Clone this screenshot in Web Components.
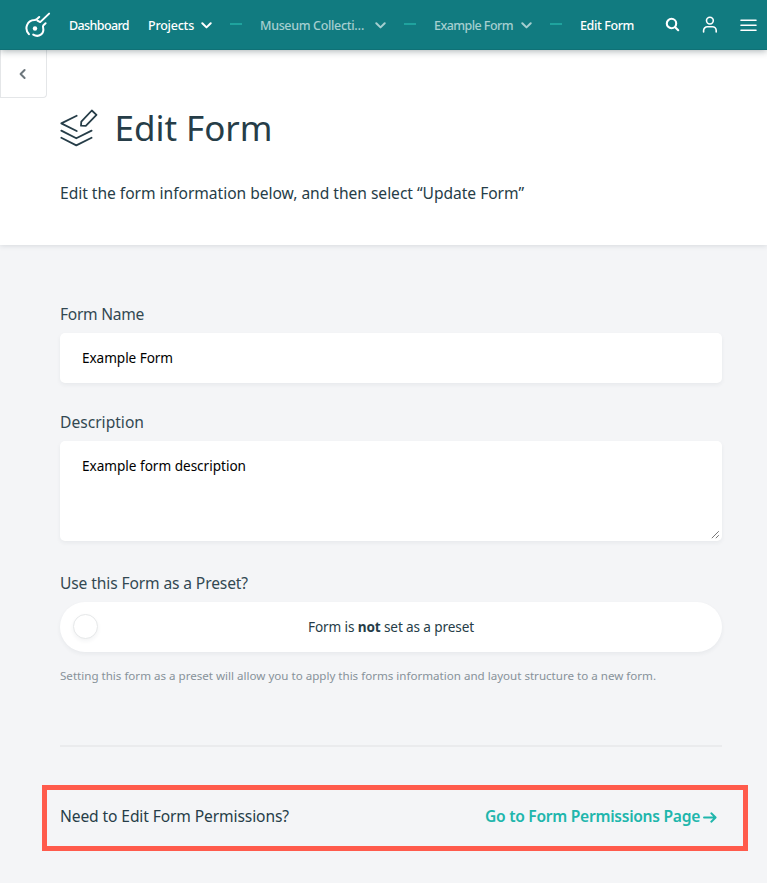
<!DOCTYPE html>
<html lang="en">
<head>
<meta charset="utf-8">
<title>Edit Form</title>
<style>
body{margin:0;background:#f4f5f7;color:#263d48;font-family:"Noto Sans","Open Sans",sans-serif;height:883px;overflow:hidden}
</style>
</head>
<body>
<edit-form-page></edit-form-page>
<script>
const define = (name, html, setup) => customElements.define(name, class extends HTMLElement {
  connectedCallback() {
    if (this.shadowRoot) return;
    const t = document.createElement('template');
    t.innerHTML = html;
    this.attachShadow({mode: 'open'}).append(t.content.cloneNode(true));
    if (setup) setup(this, this.shadowRoot);
  }
});

/* One line of text whose tracking is adjusted so it occupies the width "w". */
define('fit-text', `<style>:host{display:block;flex:none;white-space:nowrap}span{display:inline-block}</style><span><slot></slot></span>`, (el, root) => {
  const w = +el.getAttribute('w'), s = root.querySelector('span');
  el.style.width = w + 'px';
  s.style.letterSpacing = (w - s.getBoundingClientRect().width) / el.textContent.length + 'px';
});

define('chevron-down', `<style>:host{display:block;flex:none;width:11px;height:7px}svg{display:block}</style>
<svg width="11" height="7" viewBox="0 0 11 7" fill="none" stroke="currentColor" stroke-width="2" stroke-linecap="round" stroke-linejoin="round"><path d="M1.3 1.2 5.5 5.4 9.7 1.2"/></svg>`);

define('crumb-dash', `<style>:host{display:block;flex:none;width:12px;height:2px;margin-bottom:1px;background:#1fa39e}</style>`);

define('nav-crumb', `<style>:host{display:flex;flex:none;align-items:center;font-size:12.5px;font-weight:500;line-height:20px;color:#fff;padding-top:2px}
:host([muted]){color:#a5cfd0}slot{display:contents}</style><slot></slot>`);

define('app-bar', `<style>
:host{display:flex;align-items:center;height:50px;box-sizing:border-box;background:#117b80;box-shadow:0 1px 7px rgba(20,45,50,.38);border-bottom:1px solid #0f7176;position:relative;z-index:2;color:#fff}
svg{display:block;flex:none}
.logo{margin:1px 0 0 24px}
</style>
<svg class="logo" width="28" height="28" viewBox="0 0 28 28" fill="none" stroke="#fff" stroke-width="2" stroke-linecap="round" stroke-linejoin="round">
<path d="M4.9 23.2C-.2 17.2 3.2 9.4 10.5 9.1C11.6 9 12.1 8.9 12.7 8.3L15.2 6"/><path d="M13.4 9.6 16.2 11.1 25.1 2.6"/><path d="M21.6 12.2 19.2 14.5C18.8 15 18.9 15.6 19.1 16.4C20.6 22.6 14.8 27 9.2 23.6"/><circle cx="11" cy="17.5" r="2.2" fill="#fff" stroke="none"/></svg>
<nav-crumb style="margin-left:17px"><fit-text w="60">Dashboard</fit-text></nav-crumb>
<nav-crumb style="margin-left:19px"><fit-text w="46">Projects</fit-text><chevron-down style="margin-left:7px"></chevron-down></nav-crumb>
<crumb-dash style="margin-left:18px"></crumb-dash>
<nav-crumb muted style="margin-left:18px"><fit-text w="104">Museum Collecti…</fit-text><chevron-down style="margin-left:11px"></chevron-down></nav-crumb>
<crumb-dash style="margin-left:18px"></crumb-dash>
<nav-crumb muted style="margin-left:18px"><fit-text w="79">Example Form</fit-text><chevron-down style="margin-left:8px"></chevron-down></nav-crumb>
<crumb-dash style="margin-left:18px"></crumb-dash>
<nav-crumb style="margin-left:18px"><fit-text w="54">Edit Form</fit-text></nav-crumb>
<svg style="margin-left:31px" width="15" height="16" viewBox="0 0 15 16" fill="none" stroke="#fff" stroke-width="2.1" stroke-linecap="round"><circle cx="6.5" cy="6.5" r="4.7"/><path d="m10.2 10.2 3 3"/></svg>
<svg style="margin-left:22px" width="16" height="18" viewBox="0 0 16 18" fill="none" stroke="#fff" stroke-width="1.6" stroke-linecap="round"><circle cx="7.9" cy="4.6" r="3.4"/><path d="M1.6 16v-1.4a3.8 3.8 0 0 1 3.8-3.8h5a3.8 3.8 0 0 1 3.8 3.8V16"/></svg>
<svg style="margin-left:22px" width="17" height="14" viewBox="0 0 17 14" fill="none" stroke="#fff" stroke-width="1.6" stroke-linecap="round"><path d="M1 2.2h15M1 7.2h15M1 12.2h15"/></svg>`);

define('page-hero', `<style>
:host{display:block;position:relative;height:195px;background:#fff;box-shadow:0 1px 5px rgba(30,50,60,.13)}
.back{position:absolute;left:0;top:0;width:47px;height:48px;box-sizing:border-box;border:1px solid #e4e6e8;border-top:0;border-bottom-right-radius:4px;display:flex;align-items:center;justify-content:center}
.back svg{margin-right:1px}
.title{display:flex;align-items:center;padding:53px 0 0 60px;height:50px;gap:16.5px}
h1{margin:0;font-size:35px;font-weight:400;line-height:50px}
p{margin:28px 0 0 60px;font-size:15.6px;line-height:24px}
</style>
<div class="back"><svg width="8" height="12" viewBox="0 0 8 12" fill="none" stroke="#6d777d" stroke-width="2" stroke-linecap="round" stroke-linejoin="round"><path d="M5.6 2 1.6 6l4 4"/></svg></div>
<div class="title"><svg width="38" height="38" viewBox="0 0 38 38" fill="none" stroke="#263d48" stroke-width="1.8" stroke-linecap="round" stroke-linejoin="round"><path d="M16.7 6.8 1.3 14.4 16.7 22"/><path d="M1.3 21.6 16.3 29.3 31.6 21.6"/><path d="M1.3 28.8 16.3 36.4 31.6 28.8"/><path d="M21 16.7 21.3 12.6 31.8 1.5 36.5 5.9 25.8 16.8Z"/></svg>
<h1><fit-text w="158">Edit Form</fit-text></h1></div>
<p><fit-text w="464">Edit the form information below, and then select “Update Form”</fit-text></p>`);

define('form-field', `<style>
:host{display:block}
.label{font-size:15.6px;line-height:24px;color:#324852;margin-bottom:7px}
.box{box-sizing:border-box;height:50px;padding:15px 22px;background:#fff;border-radius:5px;box-shadow:0 2px 4px rgba(30,50,60,.06);font-size:13.6px;line-height:20px;color:#000;display:flex;position:relative}
:host([kind=area]) .box{height:100px}
:host([kind=toggle]) .box{border-radius:25px;padding:0 12px;align-items:center;color:#263d48}
svg{display:none;position:absolute;right:2px;bottom:2px}
:host([kind=area]) svg{display:block}
</style>
<div class="label"><slot name="label"></slot></div>
<div class="box"><slot></slot><svg width="9" height="9" viewBox="0 0 9 9" stroke="#777" stroke-width="1"><path d="M.8 8.2l7-7M4.8 8.2l3-3"/></svg></div>`);

define('toggle-knob', `<style>:host{display:block;flex:none;width:25px;height:25px;margin:0 0 1px 1px;box-sizing:border-box;border:1px solid #e6e8e9;border-radius:50%;background:#fff;box-shadow:0 2px 4px rgba(30,50,60,.06)}</style>`);

define('permissions-callout', `<style>
:host{display:flex;align-items:center;box-sizing:border-box;width:706px;height:66px;border:5px solid #ff5b4c;margin:38px 0 0 42px;padding:0 26px 4px 13px;font-size:15.6px;line-height:24px}
a{margin-left:auto;display:flex;align-items:center;gap:3px;color:#20b6ac;font-weight:600}
svg{display:block;margin-top:3px}
</style>
<fit-text w="229">Need to Edit Form Permissions?</fit-text>
<a><fit-text w="215">Go to Form Permissions Page</fit-text><svg width="14" height="11" viewBox="0 0 14 11" fill="none" stroke="currentColor" stroke-width="1.9" stroke-linecap="round" stroke-linejoin="round"><path d="M1 5.5h11.5M8.3 1.3l4.3 4.2-4.3 4.2"/></svg></a>`);

define('edit-form-page', `<style>
:host{display:block}
main{padding:57px 45px 0 60px;display:flex;flex-direction:column}
form-field+form-field{margin-top:27px}
form-field[kind=toggle]{margin-top:30px!important}
.help{margin-top:14px;font-size:11.6px;line-height:19px;color:#87929a}
.rule{height:2px;background:#eaebed;margin-top:60px}
b{font-weight:700}
</style>
<app-bar></app-bar>
<page-hero></page-hero>
<main>
<form-field><fit-text slot="label" w="84">Form Name</fit-text><fit-text w="91">Example Form</fit-text></form-field>
<form-field kind="area"><fit-text slot="label" w="84">Description</fit-text><fit-text w="164">Example form description</fit-text></form-field>
<form-field kind="toggle"><fit-text slot="label" w="188">Use this Form as a Preset?</fit-text><toggle-knob></toggle-knob><fit-text style="margin-left:210px" w="166">Form is <b>not</b> set as a preset</fit-text></form-field>
<div class="help"><fit-text w="596">Setting this form as a preset will allow you to apply this forms information and layout structure to a new form.</fit-text></div>
<div class="rule"></div>
</main>
<permissions-callout></permissions-callout>`);
</script>
</body>
</html>
